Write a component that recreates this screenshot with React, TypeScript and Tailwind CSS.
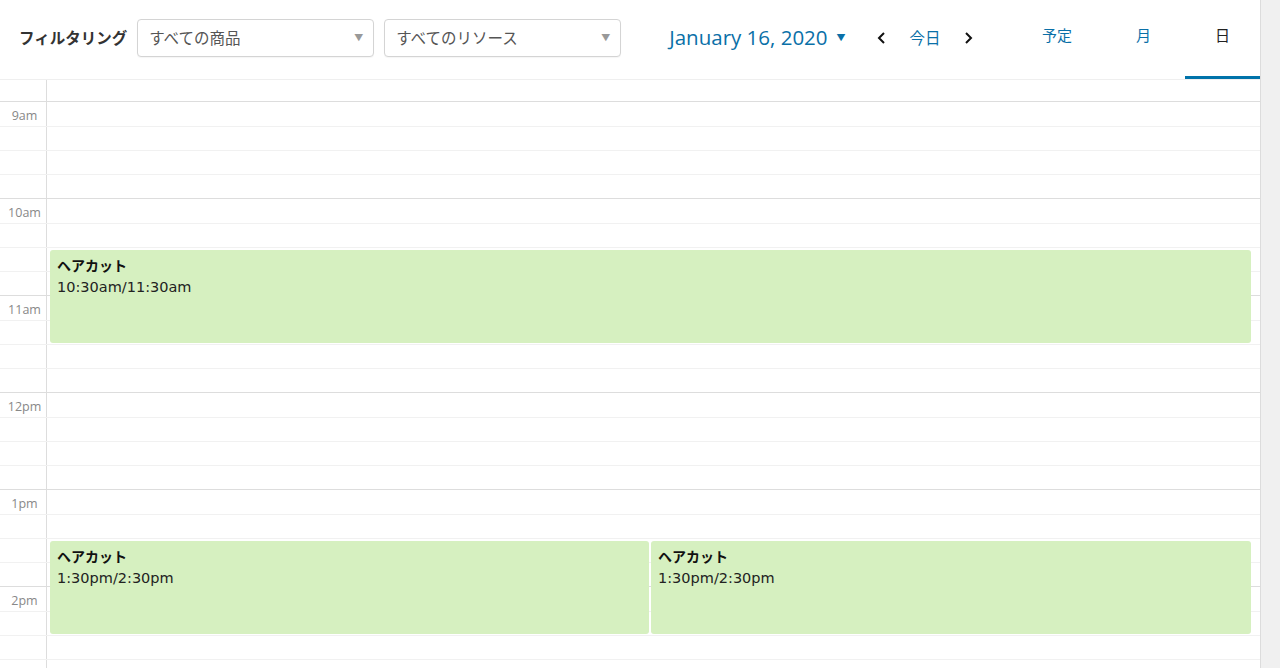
const jp = "font-['Noto_Sans_CJK_JP',sans-serif]";

const hours = ["9am", "10am", "11am", "12pm", "1pm", "2pm"];

function Select({ label, width }: { label: string; width: string }) {
  return (
    <div
      className={`flex h-[38px] ${width} items-center justify-between rounded-[4px] border border-[#d4d4d4] bg-white pl-[11px] pr-[10px] text-[15.5px] text-[#555] shadow-[0_1px_1px_rgba(0,0,0,0.04)]`}
    >
      <span>{label}</span>
      <span className="text-[9px] text-[#999]">▼</span>
    </div>
  );
}

function Chevron({ dir }: { dir: "left" | "right" }) {
  return (
    <svg width="12" height="16" viewBox="0 0 12 16" className="text-[#111]">
      <path
        d={dir === "left" ? "M8 3 L3 8 L8 13" : "M4 3 L9 8 L4 13"}
        fill="none"
        stroke="currentColor"
        strokeWidth="2"
      />
    </svg>
  );
}

function Event({
  top,
  left,
  width,
  time,
}: {
  top: number;
  left: number;
  width: number;
  time: string;
}) {
  return (
    <div
      className="absolute h-[93px] rounded-[3px] bg-[#d6f0c0] px-[7px] pt-[5px]"
      style={{ top, left, width }}
    >
      <div className={`${jp} text-[14px] font-bold leading-[20px] text-[#111]`}>
        ヘアカット
      </div>
      <div className="font-['DejaVu_Sans',sans-serif] text-[14.5px] leading-[24px] text-[#222]">
        {time}
      </div>
    </div>
  );
}

export default function App() {
  return (
    <div className={`flex h-screen w-full overflow-hidden bg-white ${jp}`}>
      <div className="flex w-[1260px] flex-col">
        <header className="flex h-[80px] shrink-0 items-center border-b border-[#efefef]">
          <div className="mb-[4px] flex items-center gap-[10px] pl-[19px]">
            <span className="text-[15.5px] font-bold text-[#333]">フィルタリング</span>
            <Select label="すべての商品" width="w-[237px]" />
            <Select label="すべてのリソース" width="w-[237px]" />
          </div>
          <div className="mb-[4px] ml-[48px] flex items-center">
            <span className="font-['Open_Sans',sans-serif] text-[20.5px] text-[#0a70a8]">
              January 16, 2020
            </span>
            <span className="ml-[9px] text-[9px] text-[#0a70a8]">▼</span>
            <div className="ml-[30px] flex items-center">
              <Chevron dir="left" />
              <span className="ml-[22px] mr-[21px] text-[15.5px] text-[#0a70a8]">今日</span>
              <Chevron dir="right" />
            </div>
          </div>
          <nav className="ml-auto flex h-full items-stretch text-[15px]">
            <div className="flex w-[90px] items-center justify-center border-b-[3px] border-transparent pb-[6px] text-[#0a70a8]">
              予定
            </div>
            <div className="flex w-[83px] items-center justify-center border-b-[3px] border-transparent pb-[6px] text-[#0a70a8]">
              月
            </div>
            <div className="flex w-[75px] items-center justify-center border-b-[3px] border-[#0073aa] pb-[6px] text-[#222]">
              日
            </div>
          </nav>
        </header>

        <div className="relative flex-1">
          <div className="flex h-[21px]">
            <div className="w-[47px] border-r border-[#ddd]" />
          </div>
          {hours.map((h) => (
            <div key={h} className="border-t border-[#ddd]">
              {[0, 1, 2, 3].map((q) => (
                <div
                  key={q}
                  className={`flex h-[24px] ${q > 0 ? "border-t border-[#f1f1f1]" : ""}`}
                >
                  <div className="w-[47px] border-r border-[#ddd] pl-[3px] text-center font-['Open_Sans',sans-serif] text-[12.5px] leading-[27px] text-[#888]">
                    {q === 0 ? h : ""}
                  </div>
                </div>
              ))}
            </div>
          ))}

          <Event top={170} left={50} width={1201} time="10:30am/11:30am" />
          <Event top={461} left={50} width={599} time="1:30pm/2:30pm" />
          <Event top={461} left={651} width={600} time="1:30pm/2:30pm" />
        </div>
      </div>
      <div className="flex-1 border-l border-[#dcdcdc] bg-[#f0f0f0]" />
    </div>
  );
}
